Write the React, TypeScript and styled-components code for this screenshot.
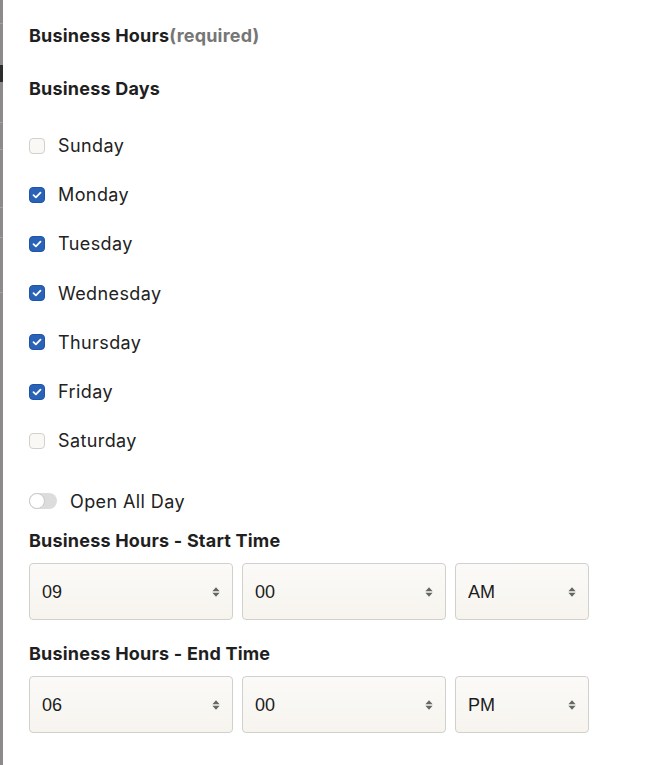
import React, { useState } from "react";
import styled, { createGlobalStyle } from "styled-components";

const GlobalStyle = createGlobalStyle`
  html, body {
    margin: 0;
    padding: 0;
    background: #ffffff;
  }
  body {
    font-family: Inter, "Liberation Sans", sans-serif;
    color: #1f1f1f;
  }
`;

const DAYS = [
  { label: "Sunday", checked: false },
  { label: "Monday", checked: true },
  { label: "Tuesday", checked: true },
  { label: "Wednesday", checked: true },
  { label: "Thursday", checked: true },
  { label: "Friday", checked: true },
  { label: "Saturday", checked: false },
];

const Page = styled.div`
  display: flex;
  height: 765px;
  overflow: hidden;
`;

// the dimmed page behind the drawer, only a sliver visible
const BackdropStrip = styled.div`
  width: 3px;
  flex-shrink: 0;
  background: #8c8a8a;
  display: flex;
  flex-direction: column;
`;

const StripMark = styled.div<{ $top: number; $h: number; $dark?: boolean }>`
  margin-top: ${(p) => p.$top}px;
  height: ${(p) => p.$h}px;
  background: ${(p) => (p.$dark ? "#2c2c2c" : "#a3a1a1")};
`;

const Panel = styled.div`
  flex: 1;
  padding: 24px 0 0 26px;
`;

const Title = styled.h2`
  margin: 0;
  font-size: 18px;
  line-height: 24px;
  font-weight: 700;
  letter-spacing: 0.2px;
  color: #1f1f1f;
`;

const Required = styled.span`
  color: #767676;
`;

const SectionLabel = styled.h3<{ $mt: number }>`
  margin: ${(p) => p.$mt}px 0 0;
  font-size: 18px;
  line-height: 24px;
  font-weight: 700;
  letter-spacing: 0.2px;
  color: #1f1f1f;
`;

const DayList = styled.div`
  margin-top: 20px;
  display: flex;
  flex-direction: column;
`;

const DayRow = styled.label`
  height: 49.2px;
  display: flex;
  align-items: center;
  gap: 13px;
  font-size: 18px;
  letter-spacing: 0.4px;
  color: #222;
  cursor: pointer;
`;

const Box = styled.span<{ $checked: boolean }>`
  width: 16px;
  height: 16px;
  box-sizing: border-box;
  border-radius: 4px;
  display: flex;
  align-items: center;
  justify-content: center;
  background: ${(p) => (p.$checked ? "#2962b7" : "#faf8f4")};
  border: 1px solid ${(p) => (p.$checked ? "#1f55a8" : "#d3d0cb")};
`;

const ToggleRow = styled.label`
  margin-top: 24px;
  height: 24px;
  display: flex;
  align-items: center;
  gap: 13px;
  font-size: 18px;
  letter-spacing: 0.4px;
  color: #222;
  cursor: pointer;
`;

const Track = styled.span<{ $on: boolean }>`
  width: 28px;
  height: 16px;
  border-radius: 8px;
  background: ${(p) => (p.$on ? "#2962b7" : "#dcdcdc")};
  display: flex;
  align-items: center;
  justify-content: ${(p) => (p.$on ? "flex-end" : "flex-start")};
`;

const Knob = styled.span`
  width: 16px;
  height: 16px;
  box-sizing: border-box;
  border-radius: 50%;
  background: #fff;
  border: 1px solid #c9c9c9;
`;

const SelectRow = styled.div`
  margin-top: 10px;
  display: flex;
  gap: 9px;
`;

const SelectWrap = styled.div<{ $w: number }>`
  position: relative;
  width: ${(p) => p.$w}px;
  height: 57px;
`;

const NativeSelect = styled.select`
  appearance: none;
  -webkit-appearance: none;
  width: 100%;
  height: 100%;
  box-sizing: border-box;
  padding: 0 30px 0 12px;
  border: 1px solid #d2d0cc;
  border-radius: 4px;
  background: linear-gradient(#fbfaf8, #f7f4ee);
  font-family: "Liberation Sans", Arial, sans-serif;
  font-size: 18px;
  color: #1c1c1c;
  outline: none;
`;

const Arrows = styled.svg`
  position: absolute;
  right: 13px;
  top: 50%;
  margin-top: -5px;
  pointer-events: none;
`;

function Check() {
  return (
    <svg width="10" height="8" viewBox="0 0 10 8">
      <path
        d="M1.5 4.2 L3.9 6.4 L8.5 1.6"
        fill="none"
        stroke="#fff"
        strokeWidth="1.8"
        strokeLinecap="round"
        strokeLinejoin="round"
      />
    </svg>
  );
}

function Select({ width, value, options }: { width: number; value: string; options: string[] }) {
  const [v, setV] = useState(value);
  return (
    <SelectWrap $w={width}>
      <NativeSelect value={v} onChange={(e) => setV(e.target.value)}>
        {options.map((o) => (
          <option key={o} value={o}>
            {o}
          </option>
        ))}
      </NativeSelect>
      <Arrows width="8" height="10" viewBox="0 0 8 10">
        <path d="M4 0.3 L7.6 4.2 L0.4 4.2 Z" fill="#666" />
        <path d="M4 9.7 L7.6 5.8 L0.4 5.8 Z" fill="#666" />
      </Arrows>
    </SelectWrap>
  );
}

const HOURS = Array.from({ length: 12 }, (_, i) => String(i + 1).padStart(2, "0"));
const MINUTES = ["00", "15", "30", "45"];
const PERIODS = ["AM", "PM"];

function TimeRow({ hour, minute, period }: { hour: string; minute: string; period: string }) {
  return (
    <SelectRow>
      <Select width={204} value={hour} options={HOURS} />
      <Select width={204} value={minute} options={MINUTES} />
      <Select width={134} value={period} options={PERIODS} />
    </SelectRow>
  );
}

export default function App() {
  const [days, setDays] = useState(DAYS);
  const [allDay, setAllDay] = useState(false);

  const toggleDay = (i: number) =>
    setDays((d) => d.map((x, j) => (j === i ? { ...x, checked: !x.checked } : x)));

  return (
    <Page>
      <GlobalStyle />
      <BackdropStrip>
        <StripMark $top={23} $h={1} />
        <StripMark $top={41} $h={17} $dark />
        <StripMark $top={40} $h={1} />
        <StripMark $top={26} $h={1} />
        <StripMark $top={57} $h={1} />
        <StripMark $top={29} $h={1} />
        <StripMark $top={54} $h={1} />
      </BackdropStrip>
      <Panel>
        <Title>
          Business Hours<Required>(required)</Required>
        </Title>
        <SectionLabel $mt={29}>Business Days</SectionLabel>
        <DayList>
          {days.map((d, i) => (
            <DayRow key={d.label} onClick={() => toggleDay(i)}>
              <Box $checked={d.checked}>{d.checked && <Check />}</Box>
              {d.label}
            </DayRow>
          ))}
        </DayList>
        <ToggleRow onClick={() => setAllDay((a) => !a)}>
          <Track $on={allDay}>
            <Knob />
          </Track>
          Open All Day
        </ToggleRow>
        <SectionLabel $mt={16}>Business Hours - Start Time</SectionLabel>
        <TimeRow hour="09" minute="00" period="AM" />
        <SectionLabel $mt={22}>Business Hours - End Time</SectionLabel>
        <TimeRow hour="06" minute="00" period="PM" />
      </Panel>
    </Page>
  );
}
